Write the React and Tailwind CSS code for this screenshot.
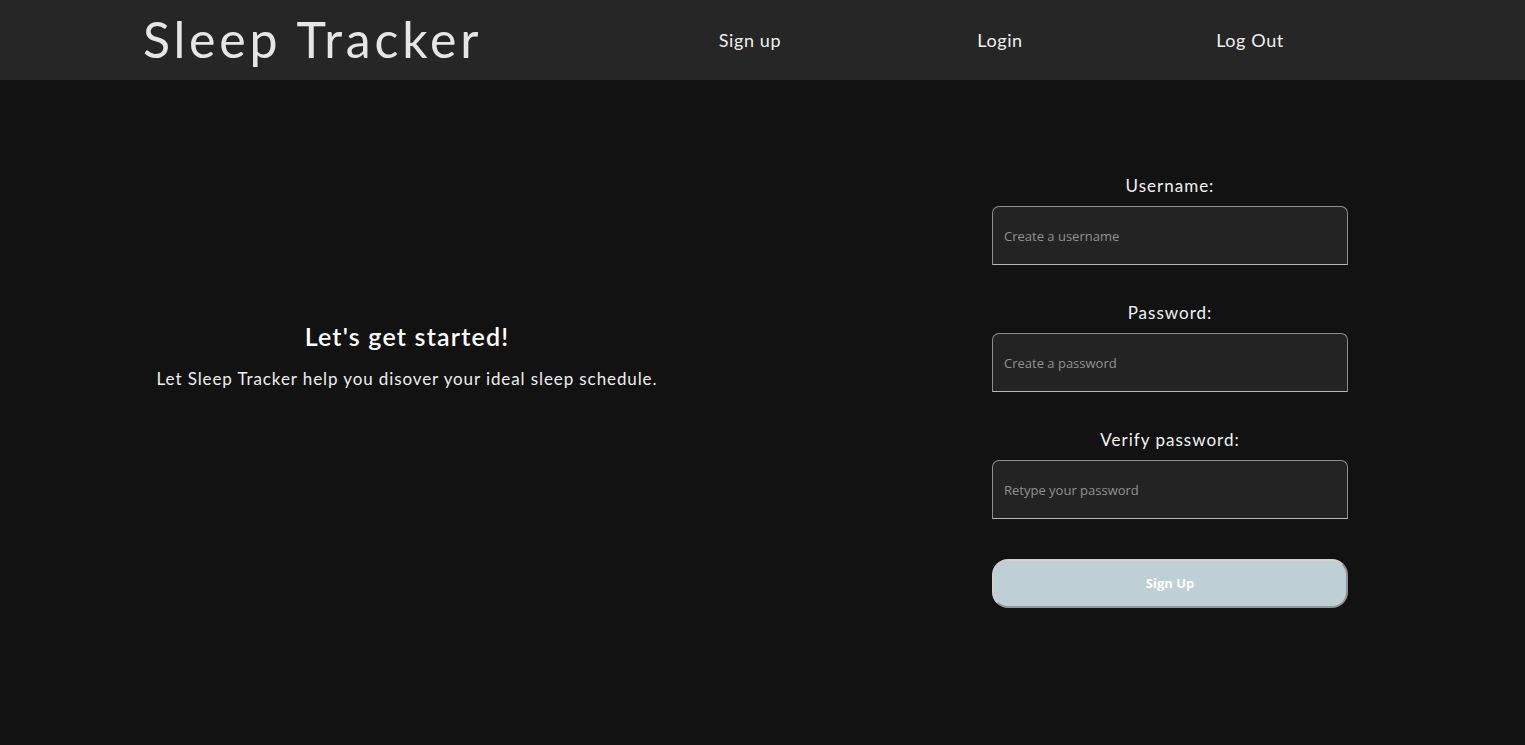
import React from "react";

function Field({ label, placeholder, type = "text" }) {
  return (
    <div className="flex flex-col items-center">
      <label className="mb-[12px] font-['Lato',sans-serif] text-[17px] leading-none tracking-[1px] text-[#f2f2f2]">
        {label}
      </label>
      <input
        type={type}
        placeholder={placeholder}
        className="h-[59px] w-[356px] rounded-t-[7px] border border-[#8d8d8d] border-b-[#b8b8b8] bg-[#232323] px-[11px] font-['Open_Sans',sans-serif] text-[13px] text-[#ddd] outline-none placeholder:text-[#919191]"
      />
    </div>
  );
}

export default function App() {
  return (
    <div className="flex min-h-[745px] flex-col bg-[#121212]">
      <header className="flex h-[80px] items-center bg-[#262626]">
        <h1 className="-mt-[2px] ml-[143px] font-['Lato',sans-serif] text-[50px] leading-none tracking-[3.8px] text-[#e6e6e6]">
          Sleep Tracker
        </h1>
        <nav className="ml-auto mr-[150px] flex font-['Lato',sans-serif] text-[18px] tracking-[0.6px] text-[#f0f0f0]">
          <a className="w-[250px] text-center">Sign up</a>
          <a className="w-[250px] text-center">Login</a>
          <a className="w-[250px] text-center">Log Out</a>
        </nav>
      </header>
      <main className="flex flex-1">
        <section className="ml-[143px] mt-[244px] flex w-[528px] flex-col items-center font-['Lato',sans-serif]">
          <h2 className="text-[25px] font-semibold leading-none tracking-[1.2px] text-white">
            Let's get started!
          </h2>
          <p className="mt-[21px] text-[17px] leading-none tracking-[0.9px] text-[#eeeeee]">
            Let Sleep Tracker help you disover your ideal sleep schedule.
          </p>
        </section>
        <form className="ml-auto mr-[177px] mt-[97px] flex w-[356px] flex-col gap-[39px]">
          <Field label="Username:" placeholder="Create a username" />
          <Field label="Password:" placeholder="Create a password" type="password" />
          <Field label="Verify password:" placeholder="Retype your password" type="password" />
          <button
            type="button"
            className="mt-[1px] h-[49px] w-[356px] rounded-[16px] border-2 border-[#d0d0d0] border-b-[#959595] border-r-[#959595] bg-[#bfcfd6] font-['Open_Sans',sans-serif] text-[13px] font-bold text-white"
          >
            Sign Up
          </button>
        </form>
      </main>
    </div>
  );
}
